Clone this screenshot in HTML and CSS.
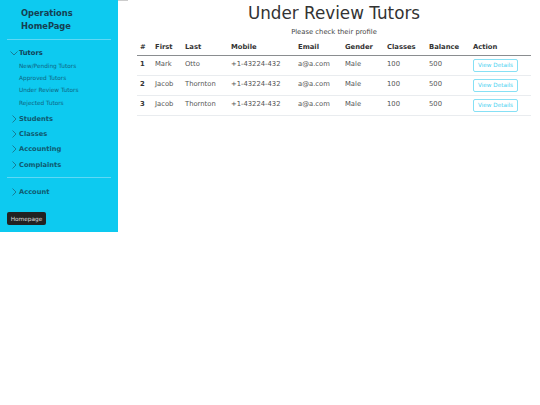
FILE: index.html
```html
<!DOCTYPE html>
<html lang="en">
<head>
    <meta charset="UTF-8">
    <meta name="viewport" content="width=device-width, initial-scale=1.0">
    <title>Under Review Tutors</title>
    <link rel="stylesheet" href="styles.css">
</head>
<body>
    <div class="page">
        <aside class="sidebar">
            <div class="brand">Operations<br>HomePage</div>
            <hr class="divider">

            <div class="menu">
                <div class="menu-item active">
                    <svg class="chevron" viewBox="0 0 8 8"><path d="M0.5 2.5 L4 6 L7.5 2.5"/></svg>
                    Tutors
                </div>
                <ul class="submenu">
                    <li>New/Pending Tutors</li>
                    <li>Approved Tutors</li>
                    <li>Under Review Tutors</li>
                    <li>Rejected Tutors</li>
                </ul>
                <div class="menu-item">
                    <svg class="chevron" viewBox="0 0 8 8"><path d="M2.5 0.5 L6 4 L2.5 7.5"/></svg>
                    Students
                </div>
                <div class="menu-item">
                    <svg class="chevron" viewBox="0 0 8 8"><path d="M2.5 0.5 L6 4 L2.5 7.5"/></svg>
                    Classes
                </div>
                <div class="menu-item">
                    <svg class="chevron" viewBox="0 0 8 8"><path d="M2.5 0.5 L6 4 L2.5 7.5"/></svg>
                    Accounting
                </div>
                <div class="menu-item">
                    <svg class="chevron" viewBox="0 0 8 8"><path d="M2.5 0.5 L6 4 L2.5 7.5"/></svg>
                    Complaints
                </div>
            </div>

            <hr class="divider divider-low">

            <div class="menu">
                <div class="menu-item">
                    <svg class="chevron" viewBox="0 0 8 8"><path d="M2.5 0.5 L6 4 L2.5 7.5"/></svg>
                    Account
                </div>
            </div>

            <button class="home-btn">Homepage</button>
        </aside>

        <main class="content">
            <h1>Under Review Tutors</h1>
            <p class="subtitle">Please check their profile</p>

            <table>
                <thead>
                    <tr>
                        <th class="col-num">#</th>
                        <th class="col-first">First</th>
                        <th class="col-last">Last</th>
                        <th class="col-mobile">Mobile</th>
                        <th class="col-email">Email</th>
                        <th class="col-gender">Gender</th>
                        <th class="col-classes">Classes</th>
                        <th class="col-balance">Balance</th>
                        <th>Action</th>
                    </tr>
                </thead>
                <tbody>
                    <tr>
                        <th>1</th>
                        <td>Mark</td>
                        <td>Otto</td>
                        <td>+1-43224-432</td>
                        <td>a@a.com</td>
                        <td>Male</td>
                        <td>100</td>
                        <td>500</td>
                        <td><button class="details-btn">View Details</button></td>
                    </tr>
                    <tr>
                        <th>2</th>
                        <td>Jacob</td>
                        <td>Thornton</td>
                        <td>+1-43224-432</td>
                        <td>a@a.com</td>
                        <td>Male</td>
                        <td>100</td>
                        <td>500</td>
                        <td><button class="details-btn">View Details</button></td>
                    </tr>
                    <tr>
                        <th>3</th>
                        <td>Jacob</td>
                        <td>Thornton</td>
                        <td>+1-43224-432</td>
                        <td>a@a.com</td>
                        <td>Male</td>
                        <td>100</td>
                        <td>500</td>
                        <td><button class="details-btn">View Details</button></td>
                    </tr>
                </tbody>
            </table>
        </main>
    </div>
</body>
</html>
```

FILE: styles.css
```css
body {
    margin: 0;
    font-family: "DejaVu Sans", sans-serif;
    color: #333;
    background-color: #fff;
}
.page {
    display: flex;
    align-items: flex-start;
}
.sidebar {
    position: relative;
    width: 118px;
    height: 232px;
    flex-shrink: 0;
    box-sizing: border-box;
    padding: 7px 7px 0;
    background-color: #0dcaf0;
    display: flex;
    flex-direction: column;
}
/* thin grey line just right of the sidebar */
.sidebar::after {
    content: "";
    position: absolute;
    top: 0;
    left: 118px;
    width: 10px;
    height: 1px;
    background-color: #ccc;
}
.brand {
    padding-left: 14px;
    font-size: 8.3px;
    font-weight: bold;
    line-height: 13px;
    color: #153f52;
}
.divider {
    width: 100%;
    margin: 6px 0 5.4px;
    border: none;
    border-top: 1px solid #5fd8f5;
}
.divider-low {
    margin: 5px 0 6.4px;
}
.menu-item {
    display: flex;
    align-items: center;
    gap: 1px;
    height: 15.2px;
    font-size: 6.7px;
    font-weight: bold;
    color: #0f5a70;
}
.menu-item.active {
    color: #123f55;
}
.chevron {
    width: 8px;
    height: 8px;
    margin-left: 3px;
    fill: none;
    stroke: #1a6a80;
    stroke-width: 0.8;
}
.submenu {
    list-style: none;
    margin: -0.75px 0 2.4px;
    padding: 0 0 0 12px;
    font-size: 5.8px;
    line-height: 12.3px;
    color: #0d6480;
}
.home-btn {
    align-self: flex-start;
    margin-top: 12.4px;
    width: 39px;
    height: 13px;
    padding: 0;
    border: none;
    border-radius: 2px;
    background-color: #222;
    color: #ddd;
    font-family: inherit;
    font-size: 5.8px;
}
.content {
    flex: 1;
    padding: 2px 9px 0 19px;
}
h1 {
    margin: 0;
    text-align: center;
    font-size: 16.8px;
    font-weight: normal;
    line-height: 22px;
}
.subtitle {
    margin: 3px 0 1px;
    text-align: center;
    font-size: 6.8px;
    line-height: 10px;
    color: #444;
}
table {
    width: 100%;
    table-layout: fixed;
    border-collapse: collapse;
    font-size: 6.8px;
    text-align: left;
}
th, td {
    box-sizing: border-box;
    padding: 0 0 0 3px;
}
thead th {
    height: 17px;
    padding-top: 2px;
    border-bottom: 1px solid #8a8d90;
}
tbody th, tbody td {
    height: 20px;
    padding-bottom: 3px;
    border-bottom: 1px solid #e9ecef;
    font-weight: normal;
    color: #555;
}
tbody th {
    font-weight: bold;
    color: #333;
}
.col-num { width: 15px; }
.col-first { width: 30px; }
.col-last { width: 46px; }
.col-mobile { width: 67px; }
.col-email { width: 47px; }
.col-gender { width: 42px; }
.col-classes { width: 42px; }
.col-balance { width: 44px; }
.details-btn {
    display: block;
    width: 45px;
    height: 13px;
    margin-top: 3px;
    padding: 0;
    border: 1px solid #86e0f5;
    border-radius: 2px;
    background: #fff;
    color: #4dd2f0;
    font-family: inherit;
    font-size: 5.7px;
}
```
